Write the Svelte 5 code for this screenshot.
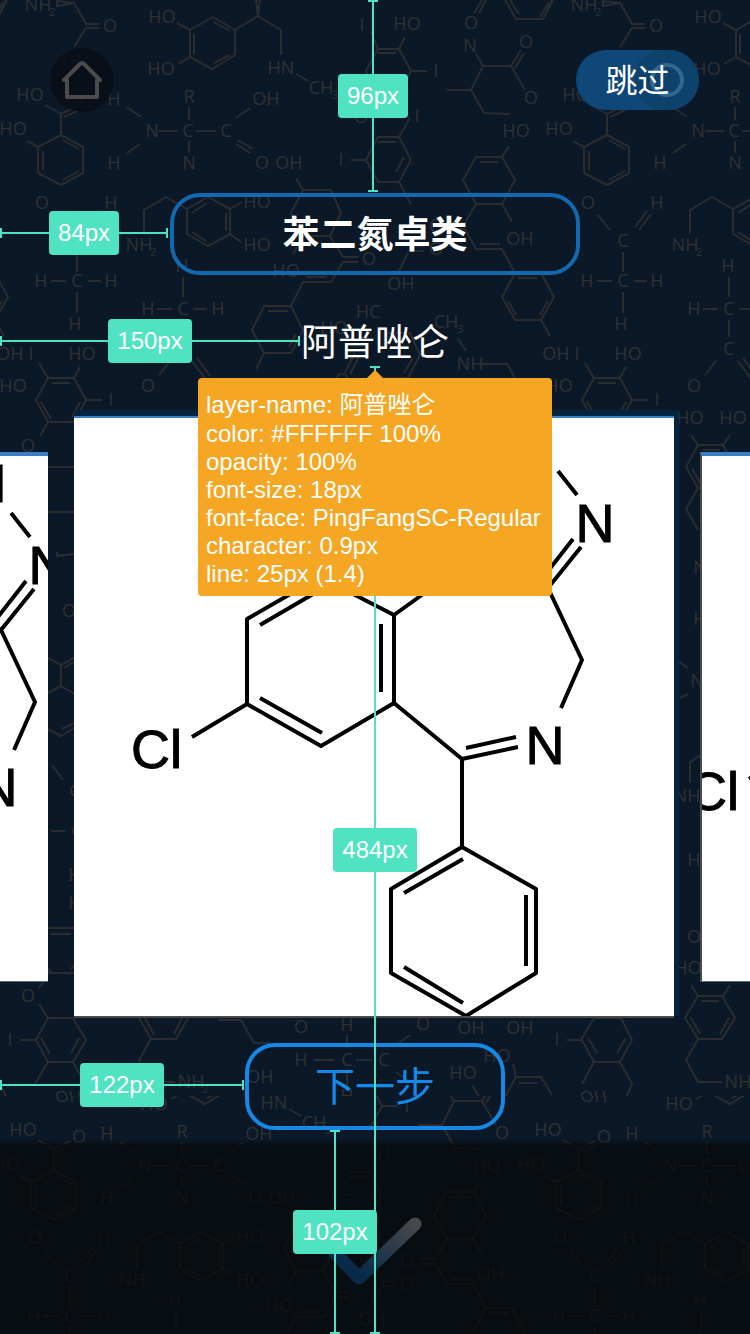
<script>
  // Repeating chemistry wallpaper: one tile of bonds and atom labels.
  const tileBonds = [
    'M0 12L6 0M57 1L57 6L74 3ZM74 3L86 24H99M99 28H86L74 47M256 0H260L258 16Z',
    'M177 23L190 30L213 17L235 30V55L212 69L190 57V30M190 57L178 64M235 30L258 16L281 30V55M296 74L308 81M194 34V54M214 22L230 31M214 63L230 55',
    'M45 105L61 114L77 106M64 117L79 110M61 114V135L83 147V173L61 185L38 173V147L61 135M27 141L38 147M43 151V170M63 140L79 149M63 180L79 171',
    'M127 107L141 117M159 131H178M189 107V120M189 141V153M196 131H216M236 118L250 108M236 144L250 153M238 140L253 149M127 153L140 144',
    'M351 160H366M378 137H399L411 160L399 182H378L366 160ZM378 142H396M396 172L404 157M410 118L399 137M399 182L411 204',
    'M378 49H399L411 71L399 93H378L366 71ZM378 53H396M405 37L399 49M411 71H427M371 32L378 49',
    'M474 13L482 0M479 13L486 0M505 0L516 19H543L553 0M510 0L519 14M540 17L549 2',
    'M476 54L483 66H511L521 50M515 68L524 53M511 66L525 90M483 66L471 90H447M471 90L484 113L510 114',
    'M509 146L502 157H476L463 180L476 204H502L515 180L502 157M480 162H498M468 190L474 200M504 200L510 190M502 204L512 222M476 204L465 223H448M448 229H465L476 249H502L515 273M480 244H500',
    'M515 273H541L554 297L541 320H515L502 297ZM518 278H537M508 301L516 315M548 301L540 315M541 320L550 336',
    'M52 215L64 230M101 211L89 227M105 214L93 230M77 252V272M51 281H66M88 281H101M77 292V313',
    'M144 233V210L166 197L187 209L208 197L230 209V234L208 246L187 234V209M230 209L242 202M230 234L241 242M226 213V231M192 213L207 203M192 232L206 241',
    'M183 277V297M157 309H172M193 309H207M183 320V337M170 361L159 375M192 361L206 380M197 358L210 376',
    'M296 178L303 190H331L341 213L330 236H303L291 213L303 190M306 194H327M303 236L293 254M330 236L343 257H358M358 262H343L331 282H303L291 306M306 277H327',
    'M264 306H291L303 330L291 353H264L252 330ZM268 311H288M296 334L289 347M264 353L256 369',
    'M408 253L399 271M411 246H424M411 251H424M384 333H410L420 355L408 378H384M413 358L404 373M458 339L466 351M482 364H507L515 378M345 372L355 353M350 374L359 357',
    'M39 363L48 378H74L86 400H102M80 367L74 378M52 383H70M86 400L74 422H48L36 400L48 378M41 402L51 419M80 402L72 417M48 422L40 436',
    'M145 435L152 445H177L184 435M177 445L189 467L177 488H152L140 467L152 445M156 450H174M146 468L154 483M152 488L140 509L152 530'
  ];
  const tileAtoms = [
    [38, 5, 'NH', '2'], [110, 26, 'O'], [76, 61, 'OH'], [162, 17, 'HO'], [161, 69, 'HO'], [281, 68, 'HN'],
    [321, 88, 'CH', '3'], [30, 95, 'HO'], [86, 102, 'O'], [13, 129, 'HO'], [114, 99, 'H'], [152, 131, 'N'],
    [188, 131, 'C'], [189, 97, 'R'], [189, 163, 'N'], [226, 131, 'C'], [266, 99, 'OH'], [262, 163, 'O'],
    [289, 163, 'OH'], [114, 163, 'H'], [362, 25, 'I'], [341, 160, 'I'], [417, 116, 'I'], [407, 24, 'HO'],
    [436, 71, 'I'], [361, 117, 'O'], [471, 23, 'O'], [470, 46, 'N'], [526, 42, 'O'], [531, 98, 'O'],
    [516, 131, 'HO'], [520, 239, 'OH'], [556, 354, 'OH'], [42, 203, 'O'], [111, 203, 'H'], [77, 241, 'C'],
    [77, 281, 'C'], [41, 281, 'H'], [111, 281, 'H'], [75, 324, 'H'], [139, 245, 'NH', '2'], [257, 202, 'HO'],
    [257, 245, 'HO'], [182, 266, 'H'], [183, 309, 'C'], [148, 309, 'H'], [218, 309, 'H'], [183, 349, 'C'],
    [148, 386, 'O'], [369, 259, 'O'], [286, 271, 'HO'], [436, 226, 'O'], [436, 249, 'O'], [401, 284, 'OH'],
    [446, 322, 'CH', '3'], [470, 364, 'NH'], [368, 312, 'HC'], [334, 328, 'HO'], [342, 380, 'O'],
    [31, 354, 'I'], [82, 354, 'HO'], [111, 400, 'I'], [28, 446, 'O'], [13, 386, 'HO'], [144, 418, 'HO'], [187, 418, 'HO']
  ];
  // Parts of the wallpaper that show around the carousel and above the tab bar.
  const midBonds = [
    'M48 467H74M48 512H74M57 552V556L74 554M48 658L61 665V686L48 693M61 665L74 658M64 668L74 662M61 686L74 694M48 729L61 736L74 728M62 729L74 723M52 765L63 780M51 831H65',
    'M48 928H74M51 934H71M48 973H74M48 968L51 973M71 969L74 965M45 980L39 988M39 1004L48 1018H73L86 1040L73 1062H48L36 1040L48 1018M20 1040H36M41 1038L50 1054M79 1038L71 1053M48 1062L35 1084M73 1062L85 1084M0 1084L6 1096',
    'M678 661L688 668M680 698L688 694M690 783V762L701 755',
    'M691 985L698 996H722L735 1018L722 1039H698L685 1018L698 996M723 996L730 985M701 1001H719M691 1018L700 1034M729 1018L720 1034M698 1039L686 1060L698 1082H722',
    'M139 1018L151 1039H176L188 1018M145 1018L154 1035M182 1018L174 1034M151 1039L139 1060L151 1082H175M218 1020H241L254 1043H270',
    'M347 1035V1048M314 1060H334M356 1060H372M347 1070V1090M399 1043L410 1035M396 1072L410 1082',
    'M567 1040H581L594 1018H621L632 1040L620 1062H594L582 1040M588 1038L597 1053M626 1038L617 1053M594 1062L582 1084M620 1062L632 1084L627 1096M505 1097L516 1077H541L552 1095M519 1083H537M513 1064L516 1077M472 1085L480 1098'
  ];
  const midAtoms = [
    [69, 611, 'O'], [75, 791, 'C'], [77, 831, 'C'], [75, 875, 'H'], [75, 903, 'H'], [28, 996, 'O'], [10, 1040, 'I'],
    [68, 1098, 'OH'], [700, 568, 'N'], [700, 619, 'H'], [697, 681, 'N'], [687, 796, 'NH'], [694, 860, 'H'], [694, 937, 'O'],
    [688, 968, 'HO'], [738, 1082, 'NH'], [191, 1082, 'NH', '2'], [260, 1077, 'OH'], [301, 1027, 'O'], [347, 1025, 'H'],
    [347, 1060, 'C'], [301, 1060, 'H'], [384, 1060, 'C'], [347, 1096, 'H'], [423, 1024, 'O'], [471, 1028, 'OH'], [520, 1028, 'OH'],
    [497, 1056, 'HO'], [463, 1073, 'HO'], [557, 1040, 'I'], [593, 1098, 'OH']
  ];

  const slides = [
    { side: true, box: '67 414 528 525' },
    { side: false, box: '74 418 600 598' },
    { side: true, box: '145 414 526 525' }
  ];
  const details = [
    'color: #FFFFFF 100%', 'opacity: 100%', 'font-size: 18px', 'font-face: PingFangSC-Regular',
    'character: 0.9px', 'line: 25px (1.4)'
  ];
</script>

{#snippet atoms(list)}
  {#each list as [x, y, label, sub]}
    <text {x} y={y + 6} text-anchor="middle">{label}</text>
    {#if sub}<text class="sub" x={x + 11} y={y + 11}>{sub}</text>{/if}
  {/each}
{/snippet}

<main class="screen">
  <svg class="wallpaper" viewBox="0 0 750 1334" preserveAspectRatio="xMidYMin slice" aria-hidden="true">
    <defs>
      <g id="tile">
        {#each tileBonds as d}<path {d} />{/each}
        {@render atoms(tileAtoms)}
      </g>
      <clipPath id="upper"><rect width="750" height="1096" /></clipPath>
      <clipPath id="lowerLeft"><rect y="1096" width="349" height="238" /></clipPath>
      <clipPath id="lowerRight"><rect x="349" y="1096" width="401" height="238" /></clipPath>
    </defs>
    <g clip-path="url(#upper)">
      <use href="#tile" x="-546" /><use href="#tile" /><use href="#tile" x="546" />
      {#each midBonds as d}<path {d} />{/each}
      {@render atoms(midAtoms)}
    </g>
    <g clip-path="url(#lowerLeft)"><use href="#tile" x="-7" y="1035" /></g>
    <g clip-path="url(#lowerRight)"><use href="#tile" x="-29" y="1035" /><use href="#tile" x="518" y="1035" /></g>
  </svg>

  <header>
    <button class="home" aria-label="Home">
      <svg viewBox="0 0 64 64"><path d="M14 32L30 16Q32 14 34 16L50 32H47V49H17V32Z" /></svg>
    </button>
    <button class="skip">
      <svg viewBox="0 0 64 64" aria-hidden="true"><circle class="disc" cx="32" cy="32" r="32" /><circle class="ring" cx="32" cy="32" r="15" /></svg>
      <span>跳过</span>
    </button>
  </header>

  <h1>苯二氮卓类</h1>
  <h2>阿普唑仑</h2>

  <section class="carousel">
    {#each slides as slide}
      <figure class="card" class:side={slide.side}>
        <svg viewBox={slide.box} preserveAspectRatio="xMidYMin slice">
          <path d="M558 471L577 495M573 539L541 580M581 547L548 588L582 660L561 708M394 615L462 566L548 588M462 566L508 471" />
          <path d="M247 619V704L321 746L394 703V615L320 577ZM260 625L320 590M260 698L322 733M381 624V692M192 737L247 704" />
          <path d="M394 703L462 759L518 747M466 748L516 737M462 759V847L536 889V973L466 1016L391 973V889L462 847M463 859L404 893M526 895V966M404 967L463 1003" />
          <text x="595" y="542" text-anchor="middle">N</text>
          <text x="534" y="460" text-anchor="middle">N</text>
          <text x="545" y="764" text-anchor="middle">N</text>
          <text x="131" y="768">Cl</text>
        </svg>
      </figure>
    {/each}
  </section>

  <button class="next">下一步</button>

  <footer>
    <svg class="check" viewBox="0 0 96 72" aria-hidden="true">
      <defs>
        <linearGradient id="tick" x1="0" y1="1" x2="1" y2="0">
          <stop offset="0.2" stop-color="#082a47" /><stop offset="0.55" stop-color="#24384a" /><stop offset="1" stop-color="#48494b" />
        </linearGradient>
      </defs>
      <path d="M8 37L32 62L88 8" stroke="url(#tick)" />
    </svg>
  </footer>

  <div class="measure vertical to-title"><span>96px</span></div>
  <div class="measure title-left"><span>84px</span></div>
  <div class="measure name-left"><span>150px</span></div>
  <div class="measure vertical name-bottom"><span>484px</span></div>
  <div class="measure next-left"><span>122px</span></div>
  <div class="measure vertical next-bottom"><span>102px</span></div>

  <aside>
    <p class="layer">layer-name: 阿普唑仑</p>
    {#each details as line}<p>{line}</p>{/each}
  </aside>
</main>

<style>
  :global(body) { margin: 0; background: #0b1827; }
  .screen {
    position: relative;
    overflow: hidden;
    display: flex;
    flex-direction: column;
    align-items: center;
    min-height: 100vh;
    background: #0b1827;
    color: #fff;
    font-family: "Liberation Sans", "Noto Sans CJK SC", sans-serif;
  }
  .screen > * { box-sizing: border-box; }
  header, h1, h2, .carousel, .next, footer { position: relative; flex: none; }
  button { font: inherit; color: inherit; cursor: pointer; }

  .wallpaper { position: absolute; inset: 0; width: 100%; height: 100%; }
  .wallpaper path { fill: none; stroke: #2b2c2f; stroke-width: 2; stroke-linejoin: round; }
  .wallpaper text { fill: #303133; font: 18px "Open Sans", "Noto Sans", sans-serif; }
  .wallpaper .sub { font-size: 11px; }

  header {
    display: flex;
    justify-content: space-between;
    align-items: center;
    width: 100%;
    padding: 48px 51px 0 50px;
  }
  .home { width: 64px; height: 64px; padding: 0; border: 0; border-radius: 50%; background: #080e16d9; }
  .home svg { display: block; }
  .home path { fill: none; stroke: #4b4b4b; stroke-width: 4; stroke-linejoin: round; }
  .skip {
    position: relative;
    width: 123px;
    height: 60px;
    padding: 0;
    border: 0;
    border-radius: 30px;
    overflow: hidden;
    background: #0e4c82e6;
    font: 32px/56px "Noto Sans CJK SC", sans-serif;
  }
  .skip svg { position: absolute; right: 0; top: -2px; width: 64px; height: 64px; }
  .skip .disc { fill: #0d426d; }
  .skip .ring { fill: none; stroke: #316890; stroke-width: 4; }
  .skip span { position: relative; display: block; height: 60px; }

  h1 {
    width: 410px;
    margin: 81px 0 0;
    padding-bottom: 4px;
    border: 4px solid #1269b0;
    border-radius: 30px;
    text-align: center;
    font: 700 37px/70px "Noto Sans CJK SC", sans-serif;
  }
  h2 { margin: 40px 0 0; font: 400 37px/50px "Noto Sans CJK SC", sans-serif; }

  .carousel {
    display: flex;
    justify-content: center;
    align-items: center;
    gap: 26px;
    width: 100%;
    margin-top: 43px;
    padding: 8px 2px 8px 0;
    overflow: hidden;
  }
  .card {
    flex: none;
    box-sizing: border-box;
    width: 600px;
    margin: 0;
    border: solid #4a4a4a;
    border-width: 2px 0;
    border-top-color: #3a7ec8;
    background: #fff;
    box-shadow: 3px -4px 0 2px #04243f;
  }
  .card.side { width: 528px; border-width: 4px 0 1px; border-bottom-color: #5d6f81; box-shadow: none; }
  .card.side:last-child { border-left: 2px solid #4a4a4a; }
  .card svg { display: block; width: 100%; }
  .card path { fill: none; stroke: #000; stroke-width: 4; stroke-linejoin: round; }
  .card text { font: 54px "Liberation Sans", sans-serif; stroke: #000; stroke-width: 1; }

  .next {
    width: 260px;
    margin-top: 17px;
    padding: 0 0 4px;
    border: 4px solid #1489e8;
    border-radius: 30px;
    background: none;
    color: #1489e8;
    font: 40px/75px "Noto Sans CJK SC", sans-serif;
  }
  footer {
    display: flex;
    justify-content: center;
    width: 100%;
    height: 190px;
    margin-top: 14px;
    padding-top: 72px;
    background: #080a0bc7;
    box-shadow: 0 0 4px 1px #080a0bc7;
  }
  .check { width: 96px; height: 72px; }
  .check path { fill: none; stroke-width: 13; stroke-linecap: round; stroke-linejoin: round; }

  .measure {
    position: absolute;
    left: 0;
    display: flex;
    align-items: center;
    justify-content: center;
    height: 10px;
    border: solid #50e3c2;
    border-width: 0 2px;
    background: linear-gradient(#50e3c2, #50e3c2) center / 100% 2px no-repeat;
  }
  .measure.vertical { width: 10px; height: auto; border-width: 2px 0; background-size: 2px 100%; }
  .measure span {
    flex: none;
    padding: 0 9px;
    border-radius: 4px;
    background: #50e3c2;
    font-size: 24px;
    line-height: 44px;
  }
  .measure.to-title { left: 368px; top: 0; height: 192px; }
  .title-left { top: 228px; width: 168px; }
  .name-left { top: 336px; width: 300px; }
  .measure.name-bottom { left: 370px; top: 366px; bottom: 0; }
  .next-left { top: 1080px; width: 244px; }
  .measure.next-bottom { left: 330px; top: 1130px; bottom: 0; }

  aside {
    position: absolute;
    left: 198px;
    top: 378px;
    padding: 12px 11px 8px 8px;
    border-radius: 4px;
    background: #f5a623;
    font-size: 24px;
    line-height: 28px;
    white-space: nowrap;
  }
  aside::before {
    content: "";
    position: absolute;
    left: 169px;
    top: -8px;
    border: solid transparent;
    border-width: 0 8px 8px;
    border-bottom-color: #f5a623;
  }
  aside p { margin: 0; }
  aside .layer { line-height: 30px; }
</style>
